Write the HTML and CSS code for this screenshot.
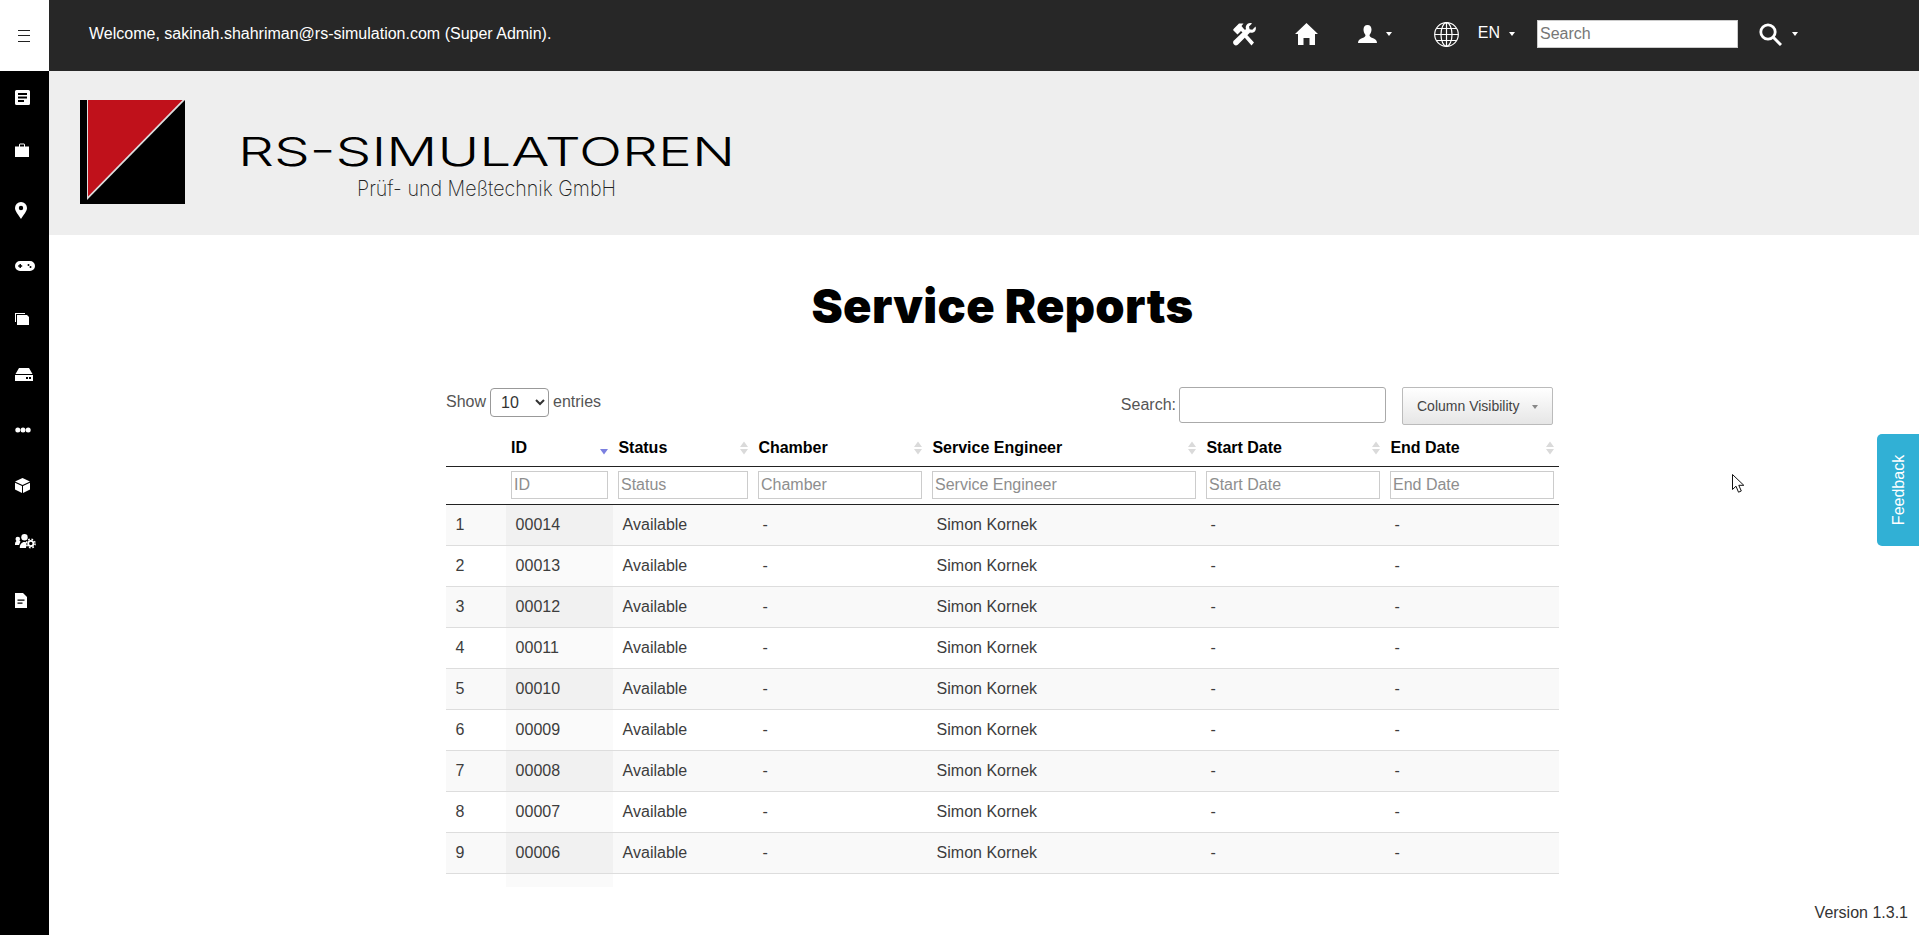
FILE: index.html
```html
<!DOCTYPE html>
<html lang="en">
<head>
  <meta charset="UTF-8">
  <title>Service Reports</title>
  <link rel="stylesheet" href="styles.css">
</head>
<body>
  <aside class="sidebar">
    <div class="menu-toggle">
      <svg width="12" height="12" viewBox="0 0 12 12"><path d="M0 .5h12M0 5.500h12M0 11.500h12" stroke="#222" stroke-width="1" fill="none"/></svg>
    </div>
    <ul class="side-list">
      <li><svg width="15" height="15" viewBox="0 0 15 15"><path fill-rule="evenodd" fill="#fff" d="M1.500 0h12A1.500 1.500 0 0 1 15 1.500v12a1.500 1.500 0 0 1-1.500 1.500h-12A1.500 1.500 0 0 1 0 13.500v-12A1.500 1.500 0 0 1 1.500 0zM3 3v2h9V3zM3 6.500v2h9v-2zM3 10v2h6v-2z"/></svg></li>
      <li><svg width="14" height="14" viewBox="0 0 14 14"><path fill="#fff" d="M0 3.500h4V1.500L5 .5h4l1 1v2h4V14H0zM5 3.500h4V1.500H5z" fill-rule="evenodd"/></svg></li>
      <li><svg width="12" height="17" viewBox="0 0 12 17"><path fill="#fff" fill-rule="evenodd" d="M6 0a6 6 0 0 1 6 6c0 3-3.500 7-6 11C3.500 13 0 9 0 6a6 6 0 0 1 6-6zM6 3.800a2.200 2.200 0 1 0 0 4.400 2.200 2.200 0 0 0 0-4.400z"/></svg></li>
      <li><svg width="20" height="10" viewBox="0 0 20 10"><path fill="#fff" fill-rule="evenodd" d="M5 0h10a5 5 0 0 1 0 10H5A5 5 0 0 1 5 0zM4.500 3v1.300H3.200v1.400h1.300V7h1.400V5.700h1.300V4.300H5.900V3zM13.500 3a1 1 0 1 0 0 2 1 1 0 0 0 0-2zM15.500 5a1 1 0 1 0 0 2 1 1 0 0 0 0-2z"/></svg></li>
      <li><svg width="14" height="12" viewBox="0 0 14 12"><path fill="#fff" d="M0 0h10v1H1v8H0zM2 2h10l2 2v8H2z"/></svg></li>
      <li><svg width="18" height="13" viewBox="0 0 18 13"><path fill="#fff" fill-rule="evenodd" d="M4 0h10l3.500 6H.5zM0 7h18v6H0zM11 9v2h2V9zM14 9v2h2V9z"/></svg></li>
      <li><svg width="16" height="6" viewBox="0 0 16 6"><circle cx="2.800" cy="3" r="2.500" fill="#fff"/><circle cx="8" cy="3" r="2.500" fill="#fff"/><circle cx="13.200" cy="3" r="2.500" fill="#fff"/></svg></li>
      <li><svg width="15" height="15" viewBox="0 0 15 15"><path fill="#fff" d="M7.500 0L15 3.500 7.500 7 0 3.500zM0 4.700l7 3.300V15L0 11.500zM15 4.700L8 8v7l7-3.500z"/></svg></li>
      <li><svg width="21" height="15" viewBox="0 0 21 15"><circle cx="2.800" cy="5" r="2.300" fill="#fff"/><circle cx="9.500" cy="3.200" r="3.200" fill="#fff"/><path fill="#fff" d="M0 10c0-2 1.500-3.500 3-3.500s2 .5 2.500 1L4 11H0zM4.800 14c0-3.500 1.800-6 4.700-6 1 0 1.500.3 2 .7L11 14z"/><circle cx="15.800" cy="9.500" r="2.600" fill="none" stroke="#fff" stroke-width="1.800"/><circle cx="15.800" cy="9.500" r="4.300" fill="none" stroke="#fff" stroke-width="1.500" stroke-dasharray="1.700 1.700"/></svg></li>
      <li><svg width="12" height="15" viewBox="0 0 12 15"><path fill="#fff" fill-rule="evenodd" d="M0 0h8l4 4v11H0zM2.500 6.500v1.200h7V6.500zM2.500 9.500v1.200h5V9.500z"/></svg></li>
    </ul>
  </aside>

  <div class="main">
    <header class="topbar">
      <span class="welcome">Welcome, sakinah.shahriman@rs-simulation.com (Super Admin).</span>
      <nav class="top-nav">
        <svg class="top-tools" width="24" height="23" viewBox="0 0 24 23"><path fill="#fff" d="M2 5.500L7 .5h4.500L9.500 3l2 2.500 2 2-2.500 2.500-2-2L7.500 9.500 5.500 11.500 1 7z"/><path fill="#fff" d="M10 11.500l2.500-2.500 9.500 10.500-2.500 3zM23.500 3.500c1 2.500 0 5-2.500 6-1 .4-2 .3-3 0L6.500 21c-1 1.500-3 2-4.500.5s-1-3.500.5-4.500L14 6c-.4-1-.4-2 0-3 1-2.500 3.500-3.500 6-2.500l-3 3 .6 2.700 2.700.6z"/></svg>
        <svg class="top-home" width="23" height="22" viewBox="0 0 23 22"><path fill="#fff" d="M11.500 0L23 11h-3v11h-5.500v-7h-6v7H3V11H0z"/></svg>
        <svg class="top-user" width="19" height="18" viewBox="0 0 19 18"><path fill="#fff" d="M9.500 0c2.700 0 4 2 4 4.500 0 2-.8 4-2 5.500 0 1.500 1 2.300 3 3 2.500 1 4.500 2 4.500 5H0c0-3 2-4 4.500-5 2-.7 3-1.500 3-3-1.200-1.500-2-3.500-2-5.500C5.500 2 6.800 0 9.500 0z"/></svg>
        <span class="caret user-caret"></span>
        <svg class="top-globe" width="25" height="25" viewBox="0 0 25 25" fill="none" stroke="#fff" stroke-width="1.200"><circle cx="12.500" cy="12.500" r="11.800"/><ellipse cx="12.500" cy="12.500" rx="5.500" ry="11.800"/><path d="M12.500 .7v23.600M.7 12.500h23.600M2.500 6.500h20M2.500 18.500h20"/></svg>
        <span class="lang">EN</span>
        <span class="caret lang-caret"></span>
        <input class="top-search" type="text" placeholder="Search">
        <svg class="top-find" width="23" height="23" viewBox="0 0 23 23" fill="none" stroke="#fff"><circle cx="9" cy="9" r="7.200" stroke-width="2.800"/><path d="M14 14l8 8" stroke-width="3"/></svg>
        <span class="caret find-caret"></span>
      </nav>
    </header>

    <div class="brand">
      <svg class="brand-logo" width="660" height="110" viewBox="0 0 660 110">
        <rect x="0" y="0" width="105" height="104" fill="#000"/>
        <path d="M7 0H105L7 100z" fill="#ddd"/>
        <path d="M8 0H102.500L8 96.500z" fill="#c0111b"/>
        <text class="brand-name" x="158" y="66" textLength="497" lengthAdjust="spacingAndGlyphs">RS-SIMULATOREN</text>
        <text class="brand-sub" x="277" y="96" textLength="259" lengthAdjust="spacingAndGlyphs">Prüf- und Meßtechnik GmbH</text>
      </svg>
    </div>

    <section class="reports">
      <h1 class="page-title">Service Reports</h1>

      <div class="table-controls">
        <label class="length-ctl">Show
          <select class="length-select"><option>10</option><option>25</option><option>50</option></select>
          entries</label>
        <div class="search-ctl">
          <label class="search-label">Search:</label>
          <input class="search-box" type="text">
          <button class="col-btn" type="button">Column Visibility<span class="col-caret"></span></button>
        </div>
      </div>

      <table class="reports-table">
        <colgroup>
          <col class="col-no"><col class="col-id"><col class="col-status"><col class="col-chamber"><col class="col-engineer"><col class="col-start"><col class="col-end">
        </colgroup>
        <thead>
          <tr class="head-row">
            <th></th>
            <th class="sorted">ID</th>
            <th class="sortable">Status</th>
            <th class="sortable">Chamber</th>
            <th class="sortable">Service Engineer</th>
            <th class="sortable">Start Date</th>
            <th class="sortable">End Date</th>
          </tr>
          <tr class="filter-row">
            <th></th>
            <th><input type="text" placeholder="ID"></th>
            <th><input type="text" placeholder="Status"></th>
            <th><input type="text" placeholder="Chamber"></th>
            <th><input type="text" placeholder="Service Engineer"></th>
            <th><input type="text" placeholder="Start Date"></th>
            <th><input type="text" placeholder="End Date"></th>
          </tr>
        </thead>
        <tbody>
          <tr><td>1</td><td class="id-cell">00014</td><td>Available</td><td>-</td><td>Simon Kornek</td><td>-</td><td>-</td></tr>
          <tr><td>2</td><td class="id-cell">00013</td><td>Available</td><td>-</td><td>Simon Kornek</td><td>-</td><td>-</td></tr>
          <tr><td>3</td><td class="id-cell">00012</td><td>Available</td><td>-</td><td>Simon Kornek</td><td>-</td><td>-</td></tr>
          <tr><td>4</td><td class="id-cell">00011</td><td>Available</td><td>-</td><td>Simon Kornek</td><td>-</td><td>-</td></tr>
          <tr><td>5</td><td class="id-cell">00010</td><td>Available</td><td>-</td><td>Simon Kornek</td><td>-</td><td>-</td></tr>
          <tr><td>6</td><td class="id-cell">00009</td><td>Available</td><td>-</td><td>Simon Kornek</td><td>-</td><td>-</td></tr>
          <tr><td>7</td><td class="id-cell">00008</td><td>Available</td><td>-</td><td>Simon Kornek</td><td>-</td><td>-</td></tr>
          <tr><td>8</td><td class="id-cell">00007</td><td>Available</td><td>-</td><td>Simon Kornek</td><td>-</td><td>-</td></tr>
          <tr><td>9</td><td class="id-cell">00006</td><td>Available</td><td>-</td><td>Simon Kornek</td><td>-</td><td>-</td></tr>
          <tr class="tail-row"><td></td><td class="id-cell"></td><td colspan="5"></td></tr>
        </tbody>
      </table>
    </section>

    <footer class="version">Version 1.3.1</footer>
  </div>

  <a class="feedback" href="#"><span>Feedback</span></a>

  <!-- mouse pointer caught in the screenshot -->
  <svg class="pointer" width="13" height="20" viewBox="0 0 13 20"><path d="M.5.5v15l3.500-3.300 2.500 6 2.800-1.200-2.500-5.700h5z" fill="#fff" stroke="#111" stroke-width="1"/></svg>
</body>
</html>
```

FILE: styles.css
```css
* {
  box-sizing: border-box;
}
html, body {
  height: 100%;
}
body {
  margin: 0;
  display: flex;
  overflow: hidden;
  font-family: "Liberation Sans", Arial, sans-serif;
  font-size: 16px;
  color: #333;
  background: #fff;
}

/* left icon rail */
.sidebar {
  width: 49px;
  flex: none;
  background: #000;
}
.menu-toggle {
  height: 71px;
  background: #fff;
  display: flex;
  align-items: center;
  justify-content: center;
  padding-right: 1px;
}
.side-list {
  list-style: none;
  margin: -2px 0 0;
  padding: 0;
}
.side-list li {
  height: 55.6px;
  padding-left: 15px;
  display: flex;
  align-items: center;
}
/* the icons don't sit on an even pitch */
.side-list li:nth-child(1) svg { margin-top: 2px; }
.side-list li:nth-child(2) svg { margin-top: -5px; }
.side-list li:nth-child(3) svg { margin-top: 5px; }
.side-list li:nth-child(4) svg { margin-top: 5px; }
.side-list li:nth-child(10) svg { margin-top: 7px; }

.main {
  flex: 1;
  min-width: 0;
  display: flex;
  flex-direction: column;
  height: 100%;
}

/* top bar */
.topbar {
  height: 71px;
  flex: none;
  background: #272727;
  color: #fff;
  display: flex;
  align-items: center;
  padding: 0 0 3px 40px;
}
.welcome {
  font-size: 16px;
}
.top-nav {
  margin-left: auto;
  padding-right: 121px;
  display: flex;
  align-items: center;
  height: 100%;
}
.top-home {
  margin-left: 39px;
}
.top-user {
  margin-left: 40px;
}
.top-globe {
  margin-left: 42px;
}
.lang {
  margin-left: 19px;
  font-size: 16px;
  margin-top: -3px;
}
.caret {
  width: 0;
  height: 0;
  border-left: 3px solid transparent;
  border-right: 3px solid transparent;
  border-top: 4px solid #fff;
}
.user-caret {
  margin-left: 9px;
}
.lang-caret {
  margin-left: 9px;
}
.find-caret {
  margin-left: 10px;
}
.top-search {
  width: 201px;
  height: 28px;
  margin-left: 22px;
  border: 1px solid #ccc;
  padding: 0 2px;
  font: 16px "Liberation Sans", Arial, sans-serif;
  background: #fff;
}
.top-search::placeholder {
  color: #777;
}
.top-find {
  margin-left: 21px;
}

/* logo band */
.brand {
  height: 164px;
  flex: none;
  background: #eee;
  padding: 29px 0 0 31px;
}
.brand-logo {
  display: block;
}
.brand-name {
  font-family: Inter, "Liberation Sans", sans-serif;
  font-weight: 300;
  font-size: 40px;
  fill: #000;
}
.brand-sub {
  font-family: Inter, "Liberation Sans", sans-serif;
  font-weight: 200;
  font-size: 21px;
  fill: #222;
}

/* report table */
.reports {
  width: 1113px;
  margin-left: 397px;
}
.page-title {
  margin: 45px 0 0;
  font-family: Inter, "Liberation Sans", sans-serif;
  font-size: 47px;
  line-height: 52px;
  font-weight: 900;
  letter-spacing: 0.3px;
  text-align: center;
  color: #000;
}
.table-controls {
  display: flex;
  justify-content: space-between;
  margin-top: 55px;
}
.length-ctl {
  color: #555;
  height: 30px;
  display: flex;
  align-items: center;
  gap: 4px;
}
.length-select {
  width: 59px;
  height: 29px;
  border: 1px solid #999;
  border-radius: 4px;
  padding-left: 6px;
  background: #fff;
  color: #333;
  font: 16px "Liberation Sans", Arial, sans-serif;
}
.search-ctl {
  display: flex;
  align-items: flex-start;
  color: #555;
  padding-right: 6px;
}
.search-label {
  line-height: 36px;
  margin-right: 3px;
}
.search-box {
  width: 207px;
  height: 36px;
  border: 1px solid #aaa;
  border-radius: 3px;
  background: #fff;
}
.col-btn {
  width: 151px;
  height: 38px;
  margin-left: 16px;
  border: 1px solid #bbb;
  border-radius: 2px;
  background: linear-gradient(to bottom, #fff, #e6e6e6);
  color: #444;
  font: 14px "Liberation Sans", Arial, sans-serif;
  text-align: left;
  padding: 0 0 0 14px;
  position: relative;
}
.col-caret {
  position: absolute;
  right: 14px;
  top: 17px;
  border-left: 3px solid transparent;
  border-right: 3px solid transparent;
  border-top: 4px solid #888;
}

.reports-table {
  width: 1113px;
  table-layout: fixed;
  border-collapse: collapse;
  margin-top: 6px;
}
.col-no { width: 60px; }
.col-id { width: 107px; }
.col-status { width: 140px; }
.col-chamber { width: 174px; }
.col-engineer { width: 274px; }
.col-start { width: 184px; }
.col-end { width: 174px; }

.head-row th {
  height: 35px;
  padding: 0 5.4px;
  text-align: left;
  font-weight: 700;
  color: #000;
  border-bottom: 1px solid #222;
  background-repeat: no-repeat;
  background-position: right 4px center;
}
.head-row th.sorted {
  padding-left: 5px;
  background-image: url("data:image/svg+xml,%3Csvg xmlns='http://www.w3.org/2000/svg' width='9' height='14'%3E%3Cpath d='M0 8h8l-4 5.500z' fill='%237b80e0'/%3E%3C/svg%3E");
}
.head-row th.sortable {
  background-image: url("data:image/svg+xml,%3Csvg xmlns='http://www.w3.org/2000/svg' width='9' height='14'%3E%3Cpath d='M0 6l4-5.500 4 5.500zM0 8h8l-4 5.500z' fill='%23dadada'/%3E%3C/svg%3E");
}
.filter-row th {
  height: 38px;
  padding: 0 5px;
  border-bottom: 1px solid #222;
}
.filter-row input {
  display: block;
  width: 100%;
  height: 28px;
  border: 1px solid #ccc;
  padding: 0 2px;
  font: 16px "Liberation Sans", Arial, sans-serif;
  background: #fff;
}
.filter-row input::placeholder {
  color: #8e8e8e;
}

.reports-table tbody td {
  height: 41px;
  padding: 0 9.6px;
  border-bottom: 1px solid #ddd;
  color: #3d3d3d;
}
.reports-table tbody tr:nth-child(odd) td {
  background: #f9f9f9;
}
.reports-table tbody tr:nth-child(even) .id-cell {
  background: #fafafa;
}
.reports-table tbody tr:nth-child(odd) .id-cell {
  background: #f1f1f1;
}
.reports-table tbody tr.tail-row td {
  height: 14px;
  padding: 0;
  border: 0;
  background: #fff;
}
.reports-table tbody tr.tail-row .id-cell {
  background: #fafafa;
}

/* bottom right version */
.version {
  margin-top: auto;
  padding: 0 11px 13px 0;
  text-align: right;
}

/* things laid over the page */
.feedback {
  position: fixed;
  right: 0;
  top: 434px;
  width: 42px;
  height: 112px;
  padding-left: 2px;
  background: #31b0d5;
  border-radius: 5px 0 0 5px;
  color: #fff;
  font-size: 16px;
  text-decoration: none;
  display: flex;
  align-items: center;
  justify-content: center;
}
.feedback span {
  transform: rotate(-90deg);
  white-space: nowrap;
}
.pointer {
  position: fixed;
  left: 1732px;
  top: 474px;
}
```
